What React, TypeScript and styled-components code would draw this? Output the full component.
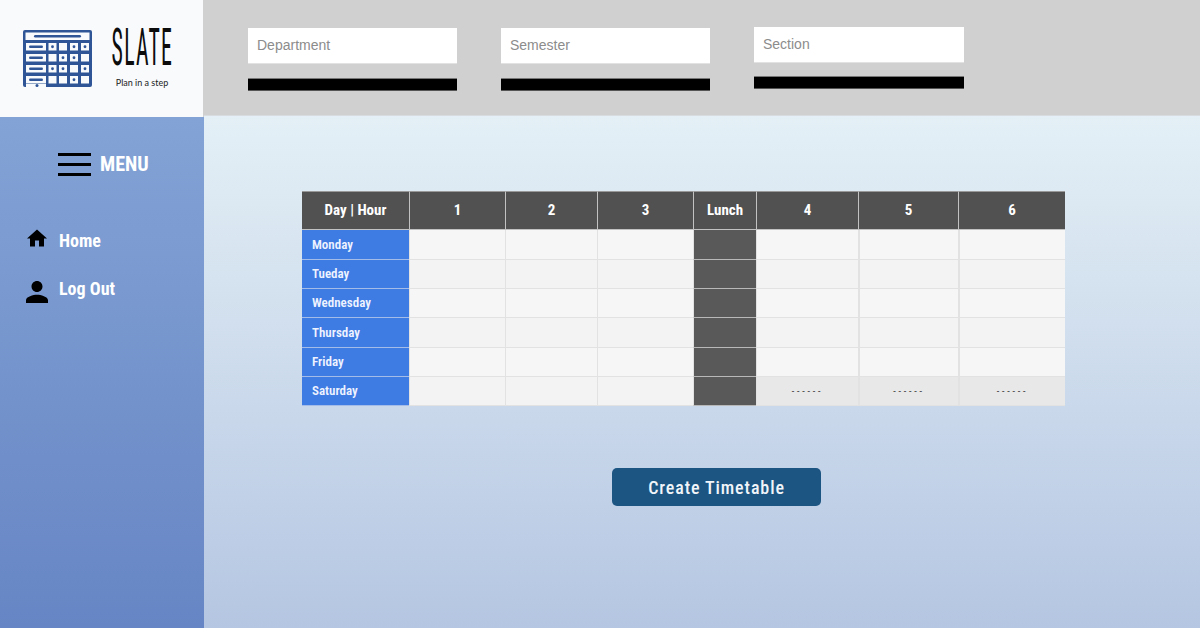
import styled, {createGlobalStyle} from "styled-components";

const GlobalStyle = createGlobalStyle`
  html, body {
    margin: 0;
    padding: 0;
    height: 628px;
    overflow: hidden;
    font-family: "Roboto", "Liberation Sans", sans-serif;
  }
`;

const Page = styled.div`
  display: grid;
  grid-template-columns: 204px 1fr;
  grid-template-rows: 116px 512px;
  width: 1200px;
  height: 628px;
  overflow: hidden;
`;

const LogoPanel = styled.div`
  display: flex;
  gap: 19px;
  padding: 30px 0 0 23px;
  box-sizing: border-box;
  height: 117px;
  background: #f8fafc;
  border-right: 1px solid #d0d0d0;
`;

const LogoWords = styled.div`
  display: flex;
  flex-direction: column;
  align-items: center;
  width: 62px;
  margin: -2px 0 0 0;
`;

const LogoName = styled.div`
  height: 40px;
  font-family: "Roboto", sans-serif;
  font-stretch: 75%;
  font-size: 52px;
  line-height: 40px;
  font-weight: 400;
  letter-spacing: 3px;
  color: #0c0c0c;
  white-space: nowrap;
  transform: scaleX(0.42);
`;

const LogoTag = styled.div`
  margin-top: 9px;
  font-family: "Lato", sans-serif;
  font-size: 9px;
  line-height: 11px;
  color: #222;
  white-space: nowrap;
`;

const TopBar = styled.div`
  display: flex;
  gap: 44px;
  padding: 28px 0 0 44px;
  background: #d0d0d0;
  border-bottom: 1px solid #d8dcdf;
  box-sizing: border-box;
`;

const Field = styled.div<{$raised?: boolean}>`
  display: flex;
  flex-direction: column;
  gap: ${(p) => (p.$raised ? 13 : 14)}px;
  width: ${(p) => (p.$raised ? 210 : 209)}px;
  margin-top: ${(p) => (p.$raised ? -1 : 0)}px;
`;

const TextInput = styled.input`
  width: 100%;
  height: 36px;
  box-sizing: border-box;
  padding: 0 9px 2px;
  border: 0;
  border-bottom: 1px solid #e2e2e2;
  background: #fff;
  font-family: "Liberation Sans", sans-serif;
  font-size: 14px;
  outline: none;
  &::placeholder {
    color: #8c8c8c;
    opacity: 1;
  }
`;

const FieldBar = styled.div`
  height: 13px;
  box-sizing: border-box;
  background: #000;
  border-top: 1px solid #777;
  border-bottom: 1px solid #555;
`;

const Sidebar = styled.nav`
  margin-top: 1px;
  padding-top: 35px;
  box-sizing: border-box;
  background: linear-gradient(180deg, #83a3d6 0%, #6685c4 100%);
`;

const MenuHead = styled.div`
  display: flex;
  align-items: center;
  gap: 9px;
  padding-left: 58px;
  height: 24px;
`;

const Burger = styled.div`
  display: flex;
  flex-direction: column;
  gap: 7px;
  width: 33px;
`;

const BurgerLine = styled.span`
  display: block;
  height: 3px;
  background: #000;
`;

const MenuTitle = styled.span`
  font-size: 20px;
  font-weight: 700;
  font-stretch: 75%;
  color: #fff;
`;

const NavList = styled.div`
  display: flex;
  flex-direction: column;
  gap: 22px;
  margin-top: 51px;
`;

const NavItem = styled.a`
  display: flex;
  align-items: center;
  gap: 11px;
  height: 26px;
  padding-left: 26px;
  font-size: 18px;
  font-weight: 700;
  font-stretch: 75%;
  color: #fff;
`;

const NavIcon = styled.svg<{$shift: number}>`
  width: 22px;
  flex: none;
  fill: #000;
  transform: translateY(${(p) => p.$shift}px);
`;

const Main = styled.main`
  padding: 75px 0 0 98px;
  background: linear-gradient(180deg, #e4f0f6 0%, #b5c6e2 100%);
`;

const Grid = styled.table`
  table-layout: fixed;
  width: 763px;
  border-collapse: separate;
  border-spacing: 0;
  background: #f5f5f5;
`;

const HeadCell = styled.th`
  height: 39px;
  padding: 0 0 2px;
  box-sizing: border-box;
  background: #515151;
  border-top: 1px solid #999;
  border-left: 1px solid #c2c2c2;
  border-bottom: 1px solid #c2c2c2;
  color: #fff;
  font-size: 15px;
  font-weight: 700;
  font-stretch: 75%;
  &:first-child {
    border-left: 0;
  }
`;

const DayCell = styled.td`
  padding: 0 0 1px 10px;
  box-sizing: border-box;
  background: #3e7be3;
  border-bottom: 1px solid #a3bde8;
  color: #eef3ff;
  font-size: 13px;
  font-weight: 600;
  font-stretch: 75%;
`;

const SlotCell = styled.td<{$shade?: boolean; $blank?: boolean; $wide?: boolean}>`
  padding: 0;
  box-sizing: border-box;
  text-align: center;
  background: ${(p) => (p.$blank ? "#e8e8e8" : p.$shade ? "#f3f3f3" : "#f6f6f6")};
  border-left: ${(p) => (p.$wide ? 2 : 1)}px solid #e2e2e2;
  border-bottom: 1px solid #e2e2e2;
  color: #222;
  font-size: 9px;
  letter-spacing: 2.8px;
`;

const LunchCell = styled.td`
  padding: 0;
  background: #595959;
  border-left: 1px solid #e2e2e2;
  border-bottom: 1px solid #b8b8b8;
`;

const GridRow = styled.tr<{$h: number}>`
  height: ${(p) => p.$h}px;
`;

const CreateButton = styled.button`
  display: block;
  width: 209px;
  height: 38px;
  margin: 62px 0 0 310px;
  border: 0;
  border-radius: 5px;
  background: #1c5582;
  color: #f1f5fa;
  font-family: "Roboto", sans-serif;
  font-size: 18px;
  font-weight: 500;
  font-stretch: 75%;
  letter-spacing: 0.9px;
`;

const columns = [107, 96, 92, 96, 63, 102, 100, 107];
const heads = ["Day | Hour", "1", "2", "3", "Lunch", "4", "5", "6"];
const days = [
  {name: "Monday", h: 30},
  {name: "Tueday", h: 29, shade: true},
  {name: "Wednesday", h: 29},
  {name: "Thursday", h: 30, shade: true},
  {name: "Friday", h: 29},
  {name: "Saturday", h: 29, shade: true, half: true},
];

// cell columns and rows of the calendar mark, with the dotted cells per row
const logoCols = [25.5, 36, 47, 58];
const logoRows = [
  {y: 13, dots: [0, 2, 3]},
  {y: 24, dots: [1, 2]},
  {y: 35, dots: [0, 1, 3]},
  {y: 46, dots: [2]},
];

const CalendarLogo = () => (
  <svg width="69" height="58" viewBox="0 0 69 58">
    <rect x="0" y="0" width="69" height="57" rx="2" fill="#2f5597" />
    <rect x="2.500" y="2.500" width="64" height="7.500" fill="#f8fafc" />
    <rect x="11" y="5" width="47" height="2.500" rx="1.200" fill="#2f5597" />
    {logoRows.map((row) => (
      <g key={row.y}>
        <rect x="3" y={row.y} width="20" height="7.500" fill="#f8fafc" />
        <rect x="6" y={row.y + 2.500} width="14" height="2.500" rx="1.200" fill="#2f5597" />
        {logoCols.map((x, i) => (
          <g key={x}>
            <rect x={x} y={row.y} width="8" height="7.500" fill="#f8fafc" />
            {row.dots.includes(i) && <circle cx={x + 4} cy={row.y + 3.750} r="1.400" fill="#2f5597" />}
          </g>
        ))}
      </g>
    ))}
    <path d="M3 54h20v3.500h-20z" fill="#f8fafc" />
    <circle cx="14" cy="55.500" r="1.500" fill="#2f5597" />
  </svg>
);

const App = () => (
  <Page>
    <GlobalStyle />
    <LogoPanel>
      <CalendarLogo />
      <LogoWords>
        <LogoName>SLATE</LogoName>
        <LogoTag>Plan in a step</LogoTag>
      </LogoWords>
    </LogoPanel>
    <TopBar>
      <Field>
        <TextInput placeholder="Department" />
        <FieldBar />
      </Field>
      <Field>
        <TextInput placeholder="Semester" />
        <FieldBar />
      </Field>
      <Field $raised>
        <TextInput placeholder="Section" />
        <FieldBar />
      </Field>
    </TopBar>
    <Sidebar>
      <MenuHead>
        <Burger>
          <BurgerLine />
          <BurgerLine />
          <BurgerLine />
        </Burger>
        <MenuTitle>MENU</MenuTitle>
      </MenuHead>
      <NavList>
        <NavItem>
          <NavIcon $shift={-2} height="18" viewBox="1 3 22 17">
            <path d="M10 20v-6h4v6h5v-8h3L12 3 2 12h3v8z" />
          </NavIcon>
          Home
        </NavItem>
        <NavItem>
          <NavIcon $shift={4} height="22" viewBox="4 4 16 16">
            <path d="M12 12c2.210 0 4-1.790 4-4s-1.790-4-4-4-4 1.790-4 4 1.790 4 4 4zm0 2c-2.670 0-8 1.340-8 4v2h16v-2c0-2.660-5.330-4-8-4z" />
          </NavIcon>
          Log Out
        </NavItem>
      </NavList>
    </Sidebar>
    <Main>
      <Grid>
        <colgroup>
          {columns.map((w, i) => (
            <col key={i} style={{width: w}} />
          ))}
        </colgroup>
        <thead>
          <tr>
            {heads.map((h) => (
              <HeadCell key={h}>{h}</HeadCell>
            ))}
          </tr>
        </thead>
        <tbody>
          {days.map((d) => (
            <GridRow key={d.name} $h={d.h}>
              <DayCell>{d.name}</DayCell>
              <SlotCell $shade={d.shade} />
              <SlotCell $shade={d.shade} />
              <SlotCell $shade={d.shade} />
              <LunchCell />
              <SlotCell $shade={d.shade} $blank={d.half}>{d.half && "------"}</SlotCell>
              <SlotCell $shade={d.shade} $blank={d.half} $wide>{d.half && "------"}</SlotCell>
              <SlotCell $shade={d.shade} $blank={d.half} $wide>{d.half && "------"}</SlotCell>
            </GridRow>
          ))}
        </tbody>
      </Grid>
      <CreateButton>Create Timetable</CreateButton>
    </Main>
  </Page>
);

export default App;
